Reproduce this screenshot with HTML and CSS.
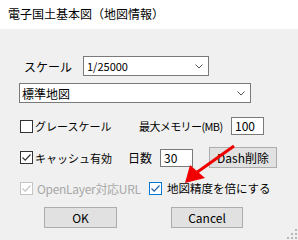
FILE: index.html
```html
<!DOCTYPE html>
<html>
<head>
	<title>電子国土基本図（地図情報）</title>
	<link rel="stylesheet" href="styles.css">
</head>
<body>
	<div class="titlebar">電子国土基本図（地図情報）</div>

	<div class="dialog">
		<div class="row r-scale">
			<span class="scale-lbl">スケール</span>
			<div class="combo c-scale">
				<span>1/25000</span>
				<svg class="chev" width="8" height="5" viewBox="0 0 8 5"><path d="M0.5 0.5 L4 4 L7.5 0.5" fill="none" stroke="#555" stroke-width="1"/></svg>
			</div>
		</div>

		<div class="row r-map">
			<div class="combo c-map">
				<span>標準地図</span>
				<svg class="chev" width="8" height="5" viewBox="0 0 8 5"><path d="M0.5 0.5 L4 4 L7.5 0.5" fill="none" stroke="#555" stroke-width="1"/></svg>
			</div>
		</div>

		<div class="row r-gray">
			<label class="chk w-gray"><span class="box"></span>グレースケール</label>
			<span class="lbl w-mem">最大メモリー(MB)</span>
			<span class="field">100</span>
		</div>

		<div class="row r-cache">
			<label class="chk w-cache"><span class="box on"><svg width="11" height="11" viewBox="0 0 11 11"><path d="M1.5 5.5 L4.2 8.2 L9.5 2.5" fill="none" stroke="#333" stroke-width="1.2"/></svg></span>キャッシュ有効</label>
			<span class="lbl w-days">日数</span>
			<span class="field">30</span>
			<span class="btn b-dash">Dash削除</span>
		</div>

		<div class="row r-opt">
			<label class="chk w-ol off"><span class="box"><svg width="11" height="11" viewBox="0 0 11 11"><path d="M1.5 5.5 L4.2 8.2 L9.5 2.5" fill="none" stroke="#c4c4c4" stroke-width="1.2"/></svg></span>OpenLayer対応URL</label>
			<label class="chk focus"><span class="box"><svg width="11" height="11" viewBox="0 0 11 11"><path d="M1.5 5.5 L4.2 8.2 L9.5 2.5" fill="none" stroke="#1d5fa8" stroke-width="1.2"/></svg></span>地図精度を倍にする</label>
		</div>

		<div class="row r-btns">
			<span class="btn b-ok">OK</span>
			<span class="btn b-cancel">Cancel</span>
		</div>
	</div>

	<!-- annotation arrow drawn over the dialog -->
	<svg class="arrow" width="298" height="240" viewBox="0 0 298 240">
		<line x1="196" y1="173" x2="234" y2="146" stroke="#f00000" stroke-width="3"/>
		<polygon points="185,183 190,165 205,178" fill="#f00000"/>
	</svg>

	<svg class="grip" width="10" height="10" viewBox="0 0 10 10">
		<rect x="8" y="0" width="2" height="2" fill="#b8b8b8"/>
		<rect x="4" y="4" width="2" height="2" fill="#b8b8b8"/>
		<rect x="8" y="4" width="2" height="2" fill="#b8b8b8"/>
		<rect x="0" y="8" width="2" height="2" fill="#b8b8b8"/>
		<rect x="4" y="8" width="2" height="2" fill="#b8b8b8"/>
		<rect x="8" y="8" width="2" height="2" fill="#b8b8b8"/>
	</svg>
</body>
</html>
```

FILE: styles.css
```css
html {font-family: "Noto Sans CJK JP", "Liberation Sans", sans-serif; font-size:12px; color:#000;}
body {margin:0; width:298px; height:240px; background:#f0f0f0; position:relative; overflow:hidden;}

.titlebar {height:29px; background:#fff; padding-left:8px; line-height:28px; box-sizing:border-box;}

.dialog {display:flex; flex-direction:column; font-size:11px; white-space:nowrap;}
.row {display:flex; align-items:center; padding-left:20px;}

.r-scale {margin-top:27px; height:20px; padding-left:24px;}
.r-map {margin-top:7px; height:20px; padding-left:19px;}
.r-gray {margin-top:14px; height:18px;}
.r-cache {margin-top:12px; height:21px;}
.r-opt {margin-top:12px; height:16px;}
.r-btns {margin-top:11px; height:21px; padding-left:44px;}

.scale-lbl {width:59px; font-size:12px;}

.combo {height:20px; box-sizing:border-box; border:1px solid #7a7a7a; background:#fff;
	display:flex; align-items:center; justify-content:space-between; padding:0 5px 0 3px;}
.c-scale {width:126px;}
.c-map {width:232px; padding-left:2px; font-size:12px;}

.chk {display:flex; align-items:center; gap:2px;}
.box {width:13px; height:13px; box-sizing:border-box; border:1px solid #333; background:#fff;
	display:flex; align-items:center; justify-content:center;}
.w-gray {width:119px;}
.w-cache {width:108px;}
.w-ol {width:129px; gap:4px; font-size:12px; letter-spacing:-0.3px;}
.off {color:#a8a8a8;}
.off .box {border-color:#c4c4c4;}
.focus {gap:5px; font-size:11.5px;}
.focus .box {border-color:#0078d7;}

.lbl.w-mem {width:92px; letter-spacing:-0.6px;}
.lbl.w-days {width:32px; font-size:12px;}

.field {width:33px; height:18px; box-sizing:border-box; border:1px solid #7a7a7a; background:#fff;
	padding-left:3px; line-height:16px; font-size:12px;}

.btn {height:21px; box-sizing:border-box; border:1px solid #adadad; background:#e1e1e1;
	display:flex; align-items:center; justify-content:center; font-size:12px;}
.b-dash {width:68px; margin-left:16px;}
.b-ok {width:73px;}
.b-cancel {width:72px; margin-left:54px;}

.arrow {position:absolute; left:0; top:0; pointer-events:none;}
.grip {position:absolute; right:1px; bottom:1px;}
```
